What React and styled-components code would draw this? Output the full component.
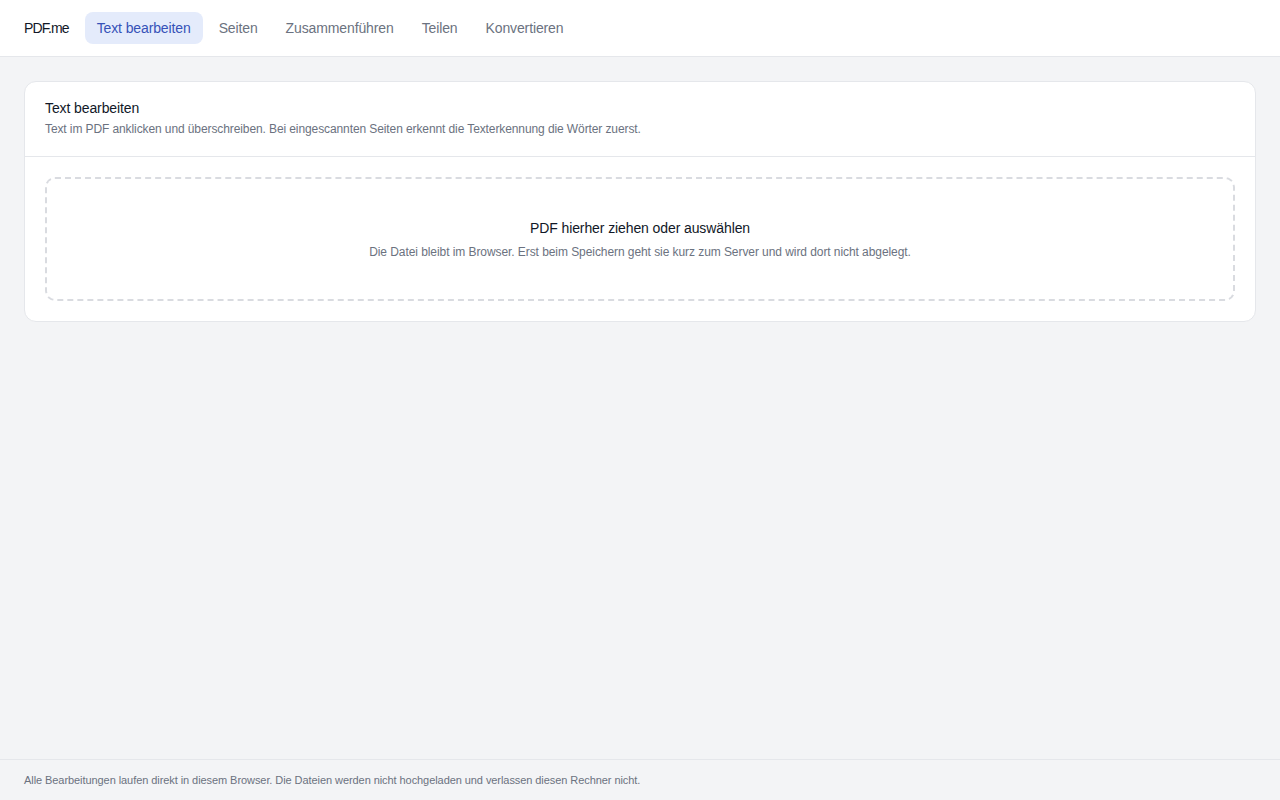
import React from 'react';
import styled, { createGlobalStyle } from 'styled-components';

const GlobalStyle = createGlobalStyle`
  html, body {
    margin: 0;
    padding: 0;
    background: #f3f4f6;
    font-family: "Liberation Sans", Arial, sans-serif;
    color: #111827;
  }
  * { box-sizing: border-box; }
`;

const Page = styled.div`
  min-height: 100vh;
  display: flex;
  flex-direction: column;
`;

const TopBar = styled.header`
  height: 57px;
  background: #ffffff;
  border-bottom: 1px solid #e5e7eb;
  display: flex;
  align-items: center;
  padding: 0 24px;
  gap: 4px;
`;

const Brand = styled.span`
  font-size: 14px;
  letter-spacing: -0.85px;
  color: #111827;
  margin-right: 12px;
`;

const NavItem = styled.a`
  height: 32px;
  display: flex;
  align-items: center;
  padding: 0 12px;
  border-radius: 8px;
  font-size: 14px;
  letter-spacing: -0.12px;
  text-decoration: none;
  cursor: pointer;
  color: ${p => (p.$active ? '#3652b8' : '#6b7280')};
  background: ${p => (p.$active ? '#e4ebfb' : 'transparent')};
`;

const Main = styled.main`
  flex: 1;
  padding: 24px;
`;

const Card = styled.section`
  background: #ffffff;
  border: 1px solid #e5e7eb;
  border-radius: 12px;
  overflow: hidden;
`;

const CardHead = styled.div`
  padding: 16px 20px 19px;
  border-bottom: 1px solid #e5e7eb;
  display: flex;
  flex-direction: column;
  gap: 3px;
`;

const CardTitle = styled.h2`
  margin: 0;
  font-size: 14px;
  line-height: 20px;
  font-weight: 400;
  letter-spacing: -0.1px;
  color: #111827;
`;

const Muted = styled.p`
  margin: 0;
  font-size: ${p => p.$size || 12}px;
  line-height: 16px;
  letter-spacing: ${p => p.$spacing ?? -0.1}px;
  color: #6b7280;
`;

const CardBody = styled.div`
  padding: 20px;
`;

const DropZone = styled.label`
  height: 124px;
  border: 2px dashed #d9dbe0;
  border-radius: 10px;
  display: flex;
  flex-direction: column;
  align-items: center;
  justify-content: center;
  gap: 6px;
  cursor: pointer;
`;

const DropTitle = styled.span`
  font-size: 14px;
  line-height: 20px;
  letter-spacing: -0.1px;
  color: #111827;
`;

const Footer = styled.footer`
  border-top: 1px solid #e5e7eb;
  padding: 12px 24px;
  height: 41px;
  display: flex;
  align-items: center;
`;

const tabs = ['Text bearbeiten', 'Seiten', 'Zusammenführen', 'Teilen', 'Konvertieren'];

export default function App() {
  return (
    <Page>
      <GlobalStyle />
      <TopBar>
        <Brand>PDF.me</Brand>
        {tabs.map((t, i) => (
          <NavItem key={t} $active={i === 0}>{t}</NavItem>
        ))}
      </TopBar>
      <Main>
        <Card>
          <CardHead>
            <CardTitle>Text bearbeiten</CardTitle>
            <Muted>Text im PDF anklicken und überschreiben. Bei eingescannten Seiten erkennt die Texterkennung die Wörter zuerst.</Muted>
          </CardHead>
          <CardBody>
            <DropZone>
              <DropTitle>PDF hierher ziehen oder auswählen</DropTitle>
              <Muted $spacing={-0.07}>Die Datei bleibt im Browser. Erst beim Speichern geht sie kurz zum Server und wird dort nicht abgelegt.</Muted>
            </DropZone>
          </CardBody>
        </Card>
      </Main>
      <Footer>
        <Muted $size={11} $spacing={-0.07}>Alle Bearbeitungen laufen direkt in diesem Browser. Die Dateien werden nicht hochgeladen und verlassen diesen Rechner nicht.</Muted>
      </Footer>
    </Page>
  );
}
